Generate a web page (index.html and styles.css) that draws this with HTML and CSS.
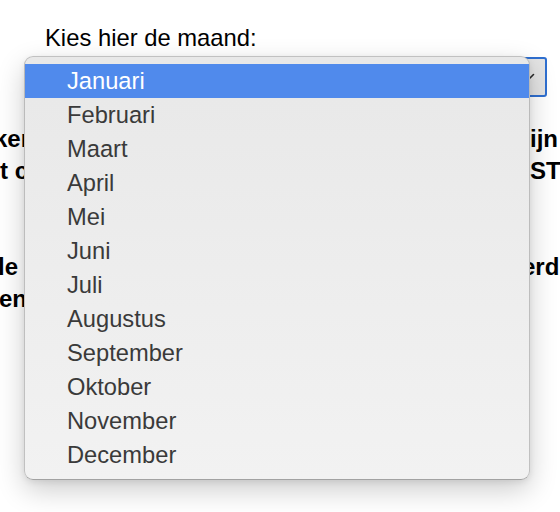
FILE: index.html
```html
<!DOCTYPE html>
<html lang="nl">
<head>
<meta charset="utf-8">
<title>Maand kiezen</title>
<link rel="stylesheet" href="styles.css">
</head>
<body>
<div class="form">
  <div class="label">Kies hier de maand:</div>
  <div class="select" role="combobox" aria-expanded="true" aria-label="Januari">
    <svg class="chevron" width="14" height="10" viewBox="0 0 14 10"><path d="M1.5 2.5 L7 8 L12.5 2.5" fill="none" stroke="#2a2a2a" stroke-width="1.6" stroke-linecap="round" stroke-linejoin="round"/></svg>
  </div>
</div>

<div class="notes">
  <p class="para">
    <span class="row"><span class="left ind-1">ker</span><span class="right">ijn</span></span>
    <span class="row"><span class="left ind-2">t c</span><span class="right">ST</span></span>
  </p>
  <p class="para">
    <span class="row"><span class="left ind-3">le</span><span class="right shift">erd</span></span>
    <span class="row"><span class="left ind-4">en</span><span class="right"></span></span>
  </p>
</div>

<ul class="popup" role="listbox">
  <li class="opt selected">Januari</li>
  <li class="opt">Februari</li>
  <li class="opt">Maart</li>
  <li class="opt">April</li>
  <li class="opt">Mei</li>
  <li class="opt">Juni</li>
  <li class="opt">Juli</li>
  <li class="opt">Augustus</li>
  <li class="opt">September</li>
  <li class="opt">Oktober</li>
  <li class="opt">November</li>
  <li class="opt">December</li>
</ul>
</body>
</html>
```

FILE: styles.css
```css
html, body {
  margin: 0;
  padding: 0;
  background: #ffffff;
  overflow: hidden;
}

body {
  width: 560px;
  height: 512px;
  position: relative;
  font-family: "Liberation Sans", Arial, sans-serif;
}

.form {
  padding: 24px 13px 0 45px;
}

.label {
  font-size: 23.8px;
  line-height: 28px;
  color: #000;
}

.select {
  margin-top: 5px;
  height: 40px;
  box-sizing: border-box;
  border: 2px solid #2f6fd0;
  border-radius: 3px;
  background: #e4e4e4;
  display: flex;
  align-items: center;
  justify-content: flex-end;
  padding: 0 10px 0 20px;
}

.chevron {
  display: block;
}

.notes {
  margin-top: 26px;
  font-weight: bold;
  font-size: 24px;
  line-height: 32px;
  color: #000;
}

.para {
  margin: 0 0 64px 0;
}

.row {
  display: flex;
  width: 560px;
  white-space: nowrap;
}

.left {
  flex: 0 0 530px;
  overflow: visible;
}

.ind-1 { text-indent: -6px; }
.ind-2 { text-indent: 0; }
.ind-3 { text-indent: -2px; }
.ind-4 { text-indent: -1px; }

.right {
  flex: 0 0 auto;
}

.right.shift {
  margin-left: -8px;
}

.popup {
  position: absolute;
  left: 24px;
  top: 56px;
  width: 506px;
  height: 424px;
  box-sizing: border-box;
  margin: 0;
  padding: 7px 0;
  list-style: none;
  border: 1px solid rgba(0, 0, 0, 0.2);
  border-bottom-color: rgba(0, 0, 0, 0.3);
  border-radius: 9px;
  background: linear-gradient(#e8e8e8, #f2f2f2);
  box-shadow: 0 10px 28px rgba(0, 0, 0, 0.2), 0 2px 6px rgba(0, 0, 0, 0.08);
}

.opt {
  height: 34px;
  box-sizing: border-box;
  padding: 2px 0 1px 42px;
  font-size: 23.7px;
  line-height: 31px;
  color: #3a3a3a;
}

.opt.selected {
  background: #508aec;
  color: #ffffff;
}
```
